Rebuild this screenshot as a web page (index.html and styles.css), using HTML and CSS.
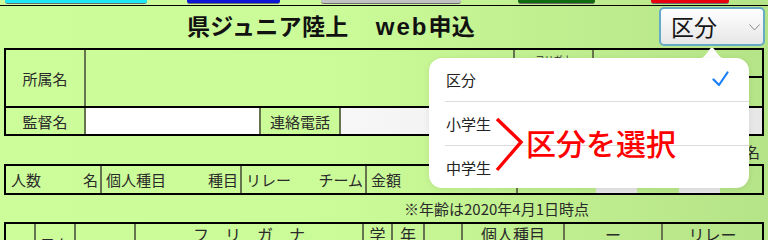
FILE: index.html
```html
<!DOCTYPE html>
<html lang="ja">
<head>
<meta charset="utf-8">
<title>県ジュニア陸上 web申込</title>
<link rel="stylesheet" href="styles.css">
</head>
<body>
<div class="page">
  <div class="tabs">
    <span class="tab tab-cyan"></span>
    <span class="tab tab-blue"></span>
    <span class="tab tab-gray"></span>
    <span class="tab tab-green"></span>
    <span class="tab tab-red"></span>
  </div>

  <div class="titlebar">
    <h1 class="title">県ジュニア陸上　<span class="latin">web</span>申込</h1>
    <div class="select">
      <span class="select-text">区分</span>
      <svg class="chevron" width="11" height="7" viewBox="0 0 11 7"><polyline points="0.5,0.5 5.5,6 10.5,0.5" fill="none" stroke="#8a8a8a" stroke-width="1"/></svg>
    </div>
  </div>

  <div class="tbl t1">
    <div class="row r1">
      <div class="cell label">所属名</div>
      <div class="cell"></div>
      <div class="cell kana">フリガナ</div>
      <div class="cell split"><div class="half"></div><div class="half"></div></div>
    </div>
    <div class="row r2">
      <div class="cell label">監督名</div>
      <div class="cell white"></div>
      <div class="cell label">連絡電話</div>
      <div class="cell grad"></div>
    </div>
  </div>

  <div class="unit-note">名</div>

  <div class="tbl t2">
    <div class="cell pair"><span>人数</span><span>名</span></div>
    <div class="cell pair"><span>個人種目</span><span>種目</span></div>
    <div class="cell pair"><span>リレー</span><span>チーム</span></div>
    <div class="cell pair"><span>金額</span></div>
    <div class="cell inputs"><span class="in"></span><span class="in"></span></div>
  </div>

  <div class="note">※年齢は2020年4月1日時点</div>

  <div class="tbl t3">
    <div class="cell low left">No.</div>
    <div class="cell low">男女</div>
    <div class="cell low small">タイプ</div>
    <div class="cell top">フ　リ　ガ　ナ</div>
    <div class="cell top">学</div>
    <div class="cell top">年</div>
    <div class="cell low small">記録</div>
    <div class="cell top">個人種目</div>
    <div class="cell top">ー</div>
    <div class="cell top">リレー</div>
  </div>

  <svg class="pop-arrow" width="28" height="12" viewBox="0 0 28 12"><path d="M0 12 C8 12 11 0.5 14 0.5 C17 0.5 20 12 28 12 Z" fill="#fff"/></svg>
  <div class="popover">
    <div class="opt"><span>区分</span>
      <svg class="check" width="17" height="16" viewBox="0 0 17 16"><polyline points="1.5,8.5 7,14 15.5,1.5" fill="none" stroke="#1a80f8" stroke-width="2.2" stroke-linecap="round" stroke-linejoin="round"/></svg>
    </div>
    <div class="opt"><span>小学生</span></div>
    <div class="opt last"><span>中学生</span></div>
  </div>

  <svg class="mark" width="40" height="60" viewBox="0 0 40 60"><polyline points="7,5 31,28 7,56" fill="none" stroke="#ff0000" stroke-width="3.4"/></svg>
  <div class="callout">区分を選択</div>
</div>
</body>
</html>
```

FILE: styles.css
```css
html, body {
  margin: 0;
  padding: 0;
}

body {
  width: 768px;
  height: 240px;
  overflow: hidden;
  font-family: "Noto Sans CJK JP", "Noto Sans", sans-serif;
  color: #222;
  background: linear-gradient(to right, #cdfc9a 0%, #cbfa98 45%, #b5e387 100%);
}

.page {
  position: relative;
  width: 768px;
  height: 240px;
}

/* top tab buttons */
.tabs {
  display: flex;
  height: 5px;
  border-bottom: 1px solid #000;
  box-sizing: content-box;
}

.tab {
  display: block;
  height: 3px;
  border-bottom: 1px solid #6d6d6d;
  border-radius: 0 0 3px 3px;
}

.tab-cyan  { width: 142px; margin-left: 5px;  background: #1ee8f6; }
.tab-blue  { width: 93px;  margin-left: 40px; background: #0c14d6; }
.tab-gray  { width: 140px; margin-left: 41px; background: #c2c2c2; }
.tab-green { width: 77px;  margin-left: 57px; background: #0f6a10; }
.tab-red   { width: 78px;  margin-left: 56px; background: #e8000f; }

/* title row */
.titlebar {
  display: flex;
  align-items: center;
  height: 42px;
}

.title {
  margin: 0 0 0 187px;
  font-family: "Liberation Sans", "Noto Sans CJK JP", sans-serif;
  font-size: 23px;
  font-weight: bold;
  line-height: 1;
  color: #111;
  letter-spacing: 0.3px;
}

.latin {
  font-size: 24px;
  letter-spacing: 2px;
  margin-left: 4px;
}

.select {
  display: flex;
  align-items: center;
  box-sizing: border-box;
  width: 106px;
  height: 39px;
  margin-left: auto;
  margin-right: 3px;
  align-self: flex-start;
  margin-top: 1px;
  padding-left: 10px;
  border: 2px solid #66abc5;
  border-radius: 5px;
  background: linear-gradient(#ffffff, #e6e6e6);
}

.select-text {
  font-size: 23px;
  line-height: 1;
  color: #151515;
}

.chevron {
  margin-left: auto;
  margin-right: 3px;
  margin-top: 2px;
}

/* tables */
.tbl {
  box-sizing: border-box;
  width: 760px;
  margin-left: 4px;
  border: 2px solid #000;
}

.cell {
  box-sizing: border-box;
  border-right: 2px solid #66734f;
}

.cell:last-child {
  border-right: none;
}

.t1 .row {
  display: grid;
}

.t1 .r1 {
  grid-template-columns: 80px 429px 79px 1fr;
  height: 58px;
  border-bottom: 2px solid #000;
  box-sizing: border-box;
}

.t1 .r2 {
  grid-template-columns: 80px 175px 80px 1fr;
  height: 26px;
}

.label {
  display: flex;
  align-items: center;
  justify-content: center;
  font-size: 15px;
  color: #2a2a2a;
}

.kana {
  font-size: 9px;
  line-height: 1;
  text-align: center;
  padding-top: 5px;
  color: #333;
}

.split {
  display: flex;
  flex-direction: column;
}

.split .half {
  flex: 1;
}

.split .half:first-child {
  border-bottom: 2px solid #000;
  flex: 0 0 26px;
}

.white {
  background: #fff;
}

.grad {
  background: linear-gradient(to right, #f7f7f7, #e7e7e7);
}

.unit-note {
  height: 28px;
  box-sizing: border-box;
  padding: 6px 8px 0 0;
  text-align: right;
  font-size: 15px;
  line-height: 20px;
  color: #2a2a2a;
}

.t2 {
  display: grid;
  grid-template-columns: 96px 140px 125px 151px 1fr;
  height: 31px;
}

.pair {
  display: flex;
  justify-content: space-between;
  align-items: center;
  padding: 0 2px 0 4px;
  font-size: 15px;
  color: #2a2a2a;
}

.t2 .pair:first-child {
  padding-left: 5px;
}

.inputs {
  display: flex;
  gap: 42px;
  padding-left: 78px;
}

.in {
  display: block;
  width: 41px;
  background: #e6e6e6;
}

.note {
  height: 27px;
  box-sizing: border-box;
  padding-left: 404px;
  font-size: 15px;
  line-height: 27px;
  color: #2a2a2a;
}

.t3 {
  display: grid;
  grid-template-columns: 30px 40px 60px 228px 29px 32px 38px 102px 98px 1fr;
  height: 50px;
  border-bottom: none;
}

.t3 .cell {
  font-size: 16px;
  line-height: 20px;
  text-align: center;
  color: #2a2a2a;
  white-space: nowrap;
  overflow: hidden;
}

.t3 .low {
  padding-top: 11px;
  font-size: 15px;
}

.t3 .small {
  font-size: 13px;
  padding-top: 12px;
}

.t3 .left {
  text-align: left;
  padding-left: 2px;
}

/* popover */
.pop-arrow {
  position: absolute;
  left: 698px;
  top: 46.5px;
}

.popover {
  position: absolute;
  left: 429px;
  top: 58px;
  width: 320px;
  height: 130px;
  background: #fff;
  border-radius: 13px;
  box-shadow: 0 1px 6px rgba(0, 0, 0, 0.08);
  display: flex;
  flex-direction: column;
}

.opt {
  display: flex;
  align-items: center;
  justify-content: space-between;
  height: 43px;
  margin-left: 16px;
  padding-left: 1px;
  padding-right: 20px;
  border-bottom: 1px solid #dcdcdc;
  font-size: 15px;
  color: #222;
}

.opt.last {
  border-bottom: none;
  flex: 1;
}

.check {
  margin-top: -1px;
}

/* annotation */
.mark {
  position: absolute;
  left: 490px;
  top: 114px;
}

.callout {
  position: absolute;
  left: 526px;
  top: 126px;
  font-size: 30px;
  line-height: 32px;
  font-weight: 500;
  color: #ff0000;
  letter-spacing: 0;
}
```
